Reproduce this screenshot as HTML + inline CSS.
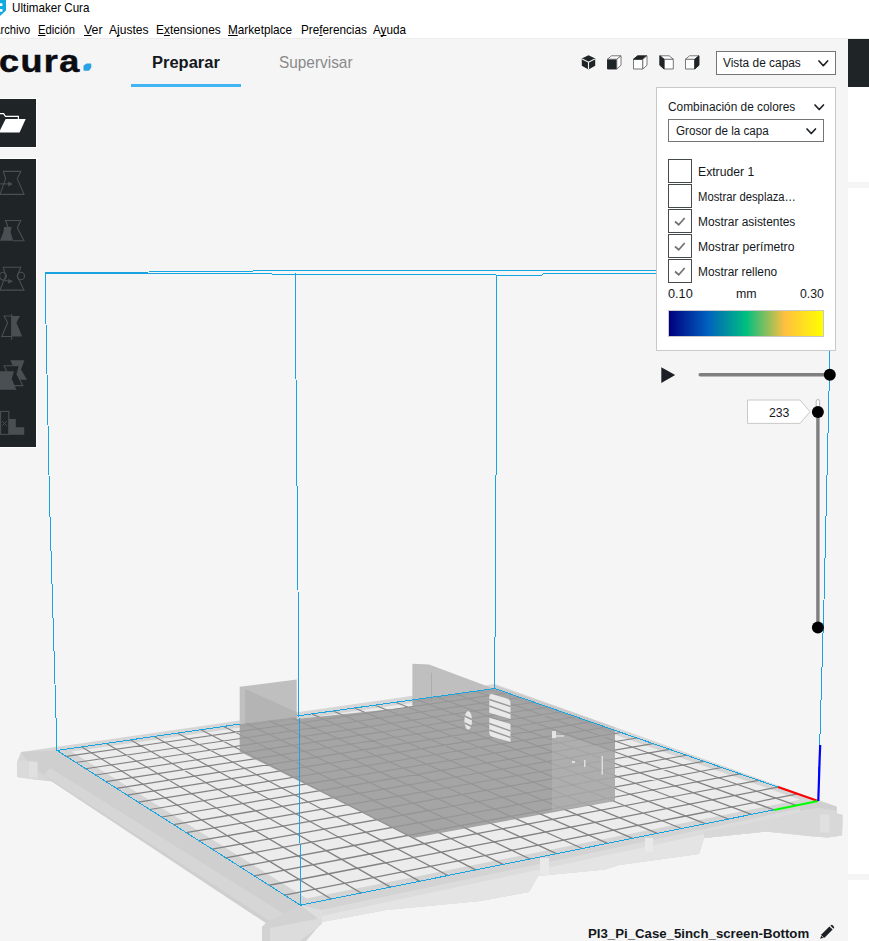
<!DOCTYPE html>
<html lang="es"><head><meta charset="utf-8"><title>Ultimaker Cura</title>
<style>
html,body{margin:0;padding:0;}
body{width:869px;height:941px;overflow:hidden;position:relative;background:#f5f5f5;font-family:"Liberation Sans",sans-serif;}
.t{position:absolute;white-space:nowrap;line-height:1;transform-origin:0 0;display:block;}
.abs{position:absolute;}
.scene{position:absolute;left:0;top:0;}
u{text-decoration:underline;text-underline-offset:1px;text-decoration-skip-ink:none;}
.cb{position:absolute;left:668px;width:22px;height:21.5px;border:1px solid #454a4d;background:#fff;}
</style></head><body>

<div class="abs" style="left:0;top:0;width:869px;height:38px;background:#fff;border-bottom:1px solid #ececec;"></div>
<svg class="scene" width="869" height="941" viewBox="0 0 869 941"><polygon points="21.0,752.0 495.0,684.0 836.5,806.6 837.0,813.5 842.5,815.0 842.0,835.6 828.0,837.6 814.5,836.6 766.0,831.5 704.0,838.0 699.0,854.0 619.0,865.0 605.0,869.5 538.0,876.0 529.0,892.0 480.0,901.0 386.0,910.0 322.0,922.0 306.0,941.0 262.0,941.0 262.0,927.0 266.0,923.0 52.0,781.5 38.0,780.0 17.0,777.0 17.0,762.0" fill="#d6d6d6"/><polygon points="57.0,750.5 21.0,752.0 30.0,765.0 52.0,781.5 266.0,923.0 300.5,905.2" fill="#cfcfcf"/><polygon points="50.0,768.0 44.0,775.0 270.0,921.0 284.0,914.0" fill="#d6d6d6"/><polygon points="17.0,762.0 22.0,760.0 38.0,762.0 38.0,780.0 17.0,777.0" fill="#dadada"/><rect x="29" y="762" width="8" height="15" fill="#e0e0e0"/><polygon points="300.5,905.2 818.0,801.0 836.5,806.6 837.0,813.5 842.5,815.0 842.0,835.6 828.0,837.6 814.5,836.6 766.0,831.5 704.0,838.0 699.0,854.0 619.0,865.0 605.0,869.5 538.0,876.0 529.0,892.0 480.0,901.0 386.0,910.0 322.0,922.0" fill="#dedede"/><polygon points="704.0,838.0 766.0,831.5 811.0,834.0 840.0,836.0 841.0,822.0 800.0,815.0 704.0,830.0" fill="#d6d6d6"/><polygon points="300.5,905.2 818.0,801.0 818.0,805.0 322.0,910.0" fill="#d3d3d3"/><polygon points="322.0,910.0 818.0,805.0 818.0,810.0 322.0,916.0" fill="#dcdcdc"/><polygon points="322.0,916.0 818.0,810.0 836.5,806.6 837.0,813.5 842.5,815.0 842.0,835.6 828.0,837.6 814.5,836.6 766.0,831.5 704.0,838.0 699.0,854.0 619.0,865.0 605.0,869.5 538.0,876.0 529.0,892.0 480.0,901.0 386.0,910.0 322.0,922.0" fill="#e4e4e4"/><polygon points="704.0,838.0 766.0,831.5 790.0,833.0 790.0,822.0 704.0,832.0" fill="#dcdcdc"/><rect x="540" y="858" width="9" height="17" fill="#e9e9e9"/><rect x="645" y="838" width="8" height="14" fill="#e9e9e9"/><polygon points="704,832 770,819 818,808 836.8,811 837,813.5 842.5,815 842,835.6 828,837.6 814.5,836.6 766,831.5 704,838" fill="#d8d8d8"/><polygon points="818,801 836.5,806.6 836.8,811 818,808 800,811 800,804.7" fill="#d0d0d0"/><rect x="820.2" y="814.3" width="9.3" height="18.2" fill="#e0e0e0"/><polygon points="266.0,923.0 300.5,905.0 322.0,922.0 306.0,941.0 262.0,941.0 262.0,927.0" fill="#d2d2d2"/><polygon points="270.0,928.0 322.0,918.0 322.0,924.0 300.0,941.0 270.0,941.0" fill="#dcdcdc"/><polygon points="57.0,750.5 300.5,905.2 818.0,801.0 494.7,688.5" fill="#d4d4d4"/><polygon points="71.4,751.5 306.6,898.4 800.3,799.8 492.0,691.5" fill="#ececec"/><path d="M428.7 704.3L507.5 693.0M475.5 691.2L528.1 709.9" stroke="#828282" stroke-width="1.0" fill="none" stroke-linecap="round"/><path d="M441.3 709.1L520.7 697.5M456.0 694.0L508.1 712.9" stroke="#828282" stroke-width="1.01" fill="none" stroke-linecap="round"/><path d="M454.1 714.0L534.1 702.2M416.4 699.6L467.3 719.1M436.3 696.8L487.8 716.0" stroke="#828282" stroke-width="1.02" fill="none" stroke-linecap="round"/><path d="M345.5 716.3L428.7 704.3M467.3 719.1L547.8 707.0M396.2 702.5L446.5 722.2" stroke="#828282" stroke-width="1.03" fill="none" stroke-linecap="round"/><path d="M357.5 721.3L441.3 709.1M375.7 705.4L425.4 725.4" stroke="#828282" stroke-width="1.04" fill="none" stroke-linecap="round"/><path d="M369.7 726.6L454.1 714.0M480.8 724.2L561.8 711.8M333.8 711.3L382.3 731.9M354.9 708.3L404.0 728.6M528.1 709.9L585.6 730.4" stroke="#828282" stroke-width="1.05" fill="none" stroke-linecap="round"/><path d="M257.7 728.9L345.5 716.3M382.3 731.9L467.3 719.1M494.6 729.5L576.1 716.8M312.5 714.3L360.3 735.2M508.1 712.9L565.1 733.7" stroke="#828282" stroke-width="1.06" fill="none" stroke-linecap="round"/><path d="M268.9 734.3L357.5 721.3M508.7 734.9L590.8 721.9M290.8 717.4L337.9 738.6M467.3 719.1L523.1 740.4M487.8 716.0L544.2 737.1" stroke="#828282" stroke-width="1.07" fill="none" stroke-linecap="round"/><path d="M280.5 739.8L369.7 726.6M395.1 737.3L480.8 724.2M246.7 723.6L292.3 745.4M523.1 740.4L605.8 727.2M268.9 720.5L315.3 742.0M446.5 722.2L501.7 743.9" stroke="#828282" stroke-width="1.08" fill="none" stroke-linecap="round"/><path d="M164.8 742.2L257.7 728.9M292.3 745.4L382.3 731.9M408.3 742.9L494.6 729.5M224.1 726.8L269.0 748.9M425.4 725.4L480.0 747.4" stroke="#828282" stroke-width="1.09" fill="none" stroke-linecap="round"/><path d="M175.2 748.0L268.9 734.3M201.3 730.1L245.3 752.5M421.7 748.6L508.7 734.9M537.9 746.1L621.2 732.5M382.3 731.9L435.5 754.5M404.0 728.6L457.9 750.9M585.6 730.4L648.8 752.9" stroke="#828282" stroke-width="1.1" fill="none" stroke-linecap="round"/><path d="M185.9 753.8L280.5 739.8M154.6 736.7L196.9 759.8M178.1 733.4L221.3 756.1M304.4 751.2L395.1 737.3M435.5 754.5L523.1 740.4M553.1 751.9L636.9 738.0M360.3 735.2L412.8 758.2M565.1 733.7L627.7 756.6" stroke="#828282" stroke-width="1.11" fill="none" stroke-linecap="round"/><path d="M66.3 756.4L164.8 742.2M130.7 740.1L172.2 763.5M316.8 757.1L408.3 742.9M337.9 738.6L389.8 761.9M568.7 757.9L653.0 743.6M544.2 737.1L606.3 760.2" stroke="#828282" stroke-width="1.12" fill="none" stroke-linecap="round"/><path d="M75.8 762.5L175.2 748.0M106.5 743.5L147.0 767.3M196.9 759.8L292.3 745.4M329.5 763.2L421.7 748.6M315.3 742.0L366.3 765.6M449.7 760.5L537.9 746.1M501.7 743.9L562.6 767.8M523.1 740.4L584.6 764.0" stroke="#828282" stroke-width="1.13" fill="none" stroke-linecap="round"/><path d="M81.9 747.0L121.5 771.1M208.2 765.9L304.4 751.2M292.3 745.4L342.6 769.5M464.2 766.7L553.1 751.9M584.6 764.0L669.6 749.4M480.0 747.4L540.2 771.6" stroke="#828282" stroke-width="1.14" fill="none" stroke-linecap="round"/><path d="M85.6 768.7L185.9 753.8M219.7 772.2L316.8 757.1M245.3 752.5L293.9 777.3M269.0 748.9L318.4 773.3M342.6 769.5L435.5 754.5M457.9 750.9L517.5 775.5M601.0 770.2L686.5 755.2" stroke="#828282" stroke-width="1.15" fill="none" stroke-linecap="round"/><path d="M95.6 775.0L196.9 759.8M221.3 756.1L269.0 781.3M356.0 775.8L449.7 760.5M479.1 773.0L568.7 757.9M435.5 754.5L494.4 779.5M648.8 752.9L718.6 777.8" stroke="#828282" stroke-width="1.16" fill="none" stroke-linecap="round"/><path d="M196.9 759.8L243.7 785.3M231.6 778.7L329.5 763.2M412.8 758.2L470.9 783.6M494.4 779.5L584.6 764.0M617.8 776.7L703.9 761.3M627.7 756.6L697.0 781.8" stroke="#828282" stroke-width="1.17" fill="none" stroke-linecap="round"/><path d="M172.2 763.5L218.0 789.5M105.9 781.6L208.2 765.9M243.7 785.3L342.6 769.5M369.7 782.4L464.2 766.7M389.8 761.9L447.1 787.7M635.0 783.3L721.7 767.5M584.6 764.0L652.7 790.0M606.3 760.2L675.0 785.9" stroke="#828282" stroke-width="1.18" fill="none" stroke-linecap="round"/><path d="M147.0 767.3L191.9 793.7M116.5 788.3L219.7 772.2M366.3 765.6L422.9 791.8M383.8 789.2L479.1 773.0M510.1 786.2L601.0 770.2M562.6 767.8L630.0 794.2" stroke="#828282" stroke-width="1.19" fill="none" stroke-linecap="round"/><path d="M121.5 771.1L165.4 797.9M342.6 769.5L398.3 796.1M256.2 792.1L356.0 775.8M526.2 793.0L617.8 776.7M540.2 771.6L607.0 798.5M652.7 790.0L739.9 773.8" stroke="#828282" stroke-width="1.2" fill="none" stroke-linecap="round"/><path d="M127.3 795.2L231.6 778.7M318.4 773.3L373.3 800.4M398.3 796.1L494.4 779.5M517.5 775.5L583.5 802.9M670.9 797.0L758.7 780.4" stroke="#828282" stroke-width="1.21" fill="none" stroke-linecap="round"/><path d="M293.9 777.3L347.9 804.8M138.4 802.2L243.7 785.3M269.1 799.1L369.7 782.4M494.4 779.5L559.7 807.3M542.7 800.1L635.0 783.3M718.6 777.8L796.2 805.4" stroke="#828282" stroke-width="1.22" fill="none" stroke-linecap="round"/><path d="M269.0 781.3L322.1 809.2M282.2 806.3L383.8 789.2M470.9 783.6L535.5 811.8M413.2 803.2L510.1 786.2M689.6 804.1L777.9 787.1M697.0 781.8L774.0 809.9" stroke="#828282" stroke-width="1.23" fill="none" stroke-linecap="round"/><path d="M243.7 785.3L295.8 813.7M149.9 809.5L256.2 792.1M447.1 787.7L510.9 816.4M428.5 810.5L526.2 793.0M559.7 807.3L652.7 790.0M675.0 785.9L751.4 814.4" stroke="#828282" stroke-width="1.24" fill="none" stroke-linecap="round"/><path d="M218.0 789.5L269.1 818.3M422.9 791.8L485.8 821.0M295.8 813.7L398.3 796.1M652.7 790.0L728.5 819.0M577.2 814.7L670.9 797.0M708.7 811.5L797.7 793.9" stroke="#828282" stroke-width="1.25" fill="none" stroke-linecap="round"/><path d="M191.9 793.7L241.9 823.0M398.3 796.1L460.4 825.7M161.7 817.0L269.1 799.1M444.2 818.0L542.7 800.1M630.0 794.2L705.1 823.7" stroke="#828282" stroke-width="1.26" fill="none" stroke-linecap="round"/><path d="M165.4 797.9L214.3 827.8M373.3 800.4L434.5 830.5M173.8 824.7L282.2 806.3M309.7 821.3L413.2 803.2M607.0 798.5L681.4 828.5M595.2 822.4L689.6 804.1" stroke="#828282" stroke-width="1.27" fill="none" stroke-linecap="round"/><path d="M347.9 804.8L408.1 835.4M583.5 802.9L657.3 833.4M324.1 829.1L428.5 810.5M460.4 825.7L559.7 807.3" stroke="#828282" stroke-width="1.28" fill="none" stroke-linecap="round"/><path d="M186.2 832.6L295.8 813.7M559.7 807.3L632.7 838.3M613.7 830.2L708.7 811.5" stroke="#828282" stroke-width="1.29" fill="none" stroke-linecap="round"/><path d="M322.1 809.2L381.3 840.4M535.5 811.8L607.7 843.3M338.8 837.2L444.2 818.0M477.0 833.7L577.2 814.7" stroke="#828282" stroke-width="1.3" fill="none" stroke-linecap="round"/><path d="M295.8 813.7L354.0 845.5M510.9 816.4L582.3 848.5M199.0 840.7L309.7 821.3M494.2 841.9L595.2 822.4" stroke="#828282" stroke-width="1.31" fill="none" stroke-linecap="round"/><path d="M269.1 818.3L326.2 850.6M354.0 845.5L460.4 825.7" stroke="#828282" stroke-width="1.32" fill="none" stroke-linecap="round"/><path d="M241.9 823.0L298.0 855.9M485.8 821.0L556.4 853.7M212.2 849.1L324.1 829.1M511.8 850.3L613.7 830.2" stroke="#828282" stroke-width="1.33" fill="none" stroke-linecap="round"/><path d="M214.3 827.8L269.2 861.2M460.4 825.7L530.0 859.0M369.7 854.0L477.0 833.7" stroke="#828282" stroke-width="1.34" fill="none" stroke-linecap="round"/><path d="M434.5 830.5L503.1 864.4M225.8 857.8L338.8 837.2" stroke="#828282" stroke-width="1.35" fill="none" stroke-linecap="round"/><path d="M408.1 835.4L475.8 869.9M385.8 862.8L494.2 841.9" stroke="#828282" stroke-width="1.36" fill="none" stroke-linecap="round"/><path d="M381.3 840.4L447.9 875.5M239.9 866.7L354.0 845.5" stroke="#828282" stroke-width="1.37" fill="none" stroke-linecap="round"/><path d="M402.4 871.9L511.8 850.3" stroke="#828282" stroke-width="1.38" fill="none" stroke-linecap="round"/><path d="M354.0 845.5L419.6 881.2M254.3 875.9L369.7 854.0" stroke="#828282" stroke-width="1.39" fill="none" stroke-linecap="round"/><path d="M326.2 850.6L390.6 887.1" stroke="#828282" stroke-width="1.4" fill="none" stroke-linecap="round"/><path d="M298.0 855.9L361.2 893.0M269.2 885.3L385.8 862.8" stroke="#828282" stroke-width="1.41" fill="none" stroke-linecap="round"/><path d="M269.2 861.2L331.1 899.0M284.6 895.1L402.4 871.9" stroke="#828282" stroke-width="1.43" fill="none" stroke-linecap="round"/><polygon points="239.7,686.7 296.7,679.6 296.7,717.0 239.7,724.0" fill="#bfbfbf"/><polygon points="245.0,689.0 296.7,712.0 296.7,717.0 245.0,723.5" fill="#b4b4b4"/><polygon points="412.4,663.8 429.0,664.4 494.0,688.7 412.4,700.0" fill="#bfbfbf"/><line x1="431.5" y1="672.8" x2="431.5" y2="701" stroke="#adadad" stroke-width="1"/><polygon points="239.7,724.0 296.7,717.0 296.7,719.0 412.4,707.0 412.4,700.0 494.0,688.7 615.0,730.0 615.0,801.0 413.0,838.0 239.7,751.5" fill="#999999" fill-opacity="0.86"/><polygon points="552.0,731.0 615.0,752.0 615.0,801.0 552.0,811.0" fill="#bcbcbc" fill-opacity="0.4"/><polygon points="494.0,685.2 615.0,727.2 615.0,730.5 494.0,688.5" fill="#c9c9c9"/><ellipse cx="468.2" cy="720.4" rx="3.8" ry="9.4" fill="#e6e6e6"/><path d="M489.3 696.5 Q489.3 693.3 492.5 694.2 L507.5 698.8 Q510.5 699.8 510.5 703 L510.5 719 L489.3 712.8 Z" fill="#e9e9e9"/><path d="M489.3 717.7 L510.5 724 L510.5 741.9 L493 737 Q489.3 736 489.3 732.5 Z" fill="#e9e9e9"/><path d="M489.3 699.5L510.5 706.5M489.3 706L510.5 713.5M489.3 723.5L510.5 731M489.3 730L510.5 737.5M464.5 716L472 719.5M464.5 723L472 726.5" stroke="#9a9a9a" stroke-width="1.5" fill="none"/><rect x="552" y="731" width="4" height="7" fill="#e4e4e4"/><rect x="556" y="735" width="8" height="2" fill="#d0d0d0"/><rect x="601.6" y="756" width="1.3" height="18.5" fill="#e4e4e4"/><rect x="584" y="760" width="1.5" height="7" fill="#e0e0e0"/><rect x="572" y="761" width="3" height="2" fill="#e0e0e0"/><path d="M57.0 750.5L300.5 905.2L818.0 801.0L494.7 688.5L297.5 715.9M239.7 724.1L57.0 750.5M57.0 750.5L49.5 500.0L45.0 273.0M45.0 273.0L295.0 270.6L660.0 271.0M45.0 273.0L496.5 275.0L542.0 275.0L543.0 274.0L660.0 273.7M300.5 905.2L298.0 590.0L295.0 270.6M494.7 688.5L496.0 480.0L496.5 275.0M818.0 801.0L824.0 600.0L830.0 350.0" stroke="#18a4e0" stroke-width="1" fill="none" stroke-linejoin="round" shape-rendering="crispEdges"/><line x1="818" y1="801" x2="778" y2="787" stroke="#ff0000" stroke-width="2"/><line x1="818" y1="801" x2="774" y2="810" stroke="#00ff00" stroke-width="2"/><path d="M818.3 801L819.6 760L820.2 745" stroke="#0000ff" stroke-width="2.2" fill="none"/></svg>
<div class="abs" style="left:848px;top:39px;width:21px;height:902px;background:#fff;"></div>
<div class="abs" style="left:848px;top:39px;width:21px;height:48px;background:#1f2427;"></div>
<div class="abs" style="left:848px;top:182px;width:21px;height:6px;background:#f5f5f5;"></div>
<div class="abs" style="left:848px;top:874px;width:21px;height:6px;background:#f5f5f5;"></div>
<svg class="abs" style="left:0;top:0" width="8" height="17" viewBox="0 0 8 17"><path d="M0 0H6V10.4L0 15.9Z" fill="#12a8e0"/><path d="M0 3.3H2.4V5.9H0ZM0 9.1H2.4V11.7H0Z" fill="#fff"/></svg>
<span class="t" style="left:11.7px;top:2.1px;font-size:12.7px;color:#000;transform:scaleX(0.9152);">Ultimaker Cura</span>
<span class="t" style="left:38.3px;top:23.2px;font-size:13px;color:#000;transform:scaleX(0.8654);"><u>E</u>dición</span>
<span class="t" style="left:83.5px;top:23.2px;font-size:13px;color:#000;transform:scaleX(0.9481);"><u>V</u>er</span>
<span class="t" style="left:109.4px;top:23.2px;font-size:13px;color:#000;transform:scaleX(0.9289);">A<u>j</u>ustes</span>
<span class="t" style="left:156.0px;top:23.2px;font-size:13px;color:#000;transform:scaleX(0.9150);">E<u>x</u>tensiones</span>
<span class="t" style="left:228.4px;top:23.2px;font-size:13px;color:#000;transform:scaleX(0.9038);"><u>M</u>arketplace</span>
<span class="t" style="left:300.5px;top:23.2px;font-size:13px;color:#000;transform:scaleX(0.9016);">Pre<u>f</u>erencias</span>
<span class="t" style="left:373.4px;top:23.2px;font-size:13px;color:#000;transform:scaleX(0.8983);">A<u>y</u>uda</span>
<span class="t" style="left:-6.8px;top:23.2px;font-size:13px;color:#000;transform:scaleX(0.8600);">Archivo</span>
<span class="t" style="left:-1.5px;top:46px;font-size:31px;font-weight:bold;letter-spacing:1.2px;color:#0b0b12;-webkit-text-stroke:0.5px #0b0b12;transform:scaleX(1.16);">cura</span>
<svg class="abs" style="left:83px;top:63px" width="9" height="8" viewBox="0 0 9 8"><path d="M1.3 2L3.6 0.5H7.6Q8.3 0.5 8.3 1.2V4.6L6.2 7.4Q5.9 7.8 5.3 7.8H1.2Q0.5 7.8 0.5 7.1V3.4Q0.5 2.5 1.3 2Z" fill="#2aa2e4"/></svg>
<span class="t" style="left:152.3px;top:55.3px;font-size:16.8px;font-weight:bold;color:#14181c;transform:scaleX(0.9825);">Preparar</span>
<span class="t" style="left:279.2px;top:55.3px;font-size:16.8px;color:#8a8a8a;transform:scaleX(0.9166);">Supervisar</span>
<div class="abs" style="left:131px;top:84px;width:110px;height:3px;background:#41b4f3;"></div>
<svg class="abs" style="left:581px;top:55px" width="15" height="15" viewBox="0 0 15 15"><path d="M7.5 0.3L14.2 3.6V10.8L7.5 14.6L0.8 10.8V3.6Z" fill="#1f2427"/><path d="M1.2 4L7.5 7.2L13.8 4M7.5 7.2V14.2" stroke="#f5f5f5" stroke-width="1.1" fill="none"/></svg>
<svg class="abs" style="left:607px;top:55px" width="15" height="15" viewBox="0 0 15 15"><path d="M0.5 4.2H9.8V14H0.5Z" fill="#1f2427" stroke="#1f2427" stroke-width="0.9" stroke-linejoin="round"/><path d="M0.5 4.2L4.6 0.8H14L9.8 4.2Z" fill="#fff" stroke="#6a6a6a" stroke-width="0.9" stroke-linejoin="round"/><path d="M9.8 4.2L14 0.8V10.2L9.8 14Z" fill="#fff" stroke="#6a6a6a" stroke-width="0.9" stroke-linejoin="round"/></svg>
<svg class="abs" style="left:633px;top:55px" width="15" height="15" viewBox="0 0 15 15"><path d="M0.5 4.2H9.8V14H0.5Z" fill="#fff" stroke="#6a6a6a" stroke-width="0.9" stroke-linejoin="round"/><path d="M0.5 4.2L4.6 0.8H14L9.8 4.2Z" fill="#1f2427" stroke="#1f2427" stroke-width="0.9" stroke-linejoin="round"/><path d="M9.8 4.2L14 0.8V10.2L9.8 14Z" fill="#fff" stroke="#6a6a6a" stroke-width="0.9" stroke-linejoin="round"/></svg>
<svg class="abs" style="left:659px;top:55px" width="15" height="15" viewBox="0 0 15 15"><path d="M5 4.2H14.3V14H5Z" fill="#fff" stroke="#6a6a6a" stroke-width="0.9" stroke-linejoin="round"/><path d="M5 4.2L0.8 0.8H10.2L14.3 4.2Z" fill="#fff" stroke="#6a6a6a" stroke-width="0.9" stroke-linejoin="round"/><path d="M5 4.2L0.8 0.8V10.2L5 14Z" fill="#1f2427" stroke="#1f2427" stroke-width="0.9" stroke-linejoin="round"/></svg>
<svg class="abs" style="left:685px;top:55px" width="15" height="15" viewBox="0 0 15 15"><path d="M0.5 4.2H9.8V14H0.5Z" fill="#fff" stroke="#6a6a6a" stroke-width="0.9" stroke-linejoin="round"/><path d="M0.5 4.2L4.6 0.8H14L9.8 4.2Z" fill="#fff" stroke="#6a6a6a" stroke-width="0.9" stroke-linejoin="round"/><path d="M9.8 4.2L14 0.8V10.2L9.8 14Z" fill="#1f2427" stroke="#1f2427" stroke-width="0.9" stroke-linejoin="round"/></svg>
<div class="abs" style="left:716px;top:51px;width:118px;height:22px;border:1px solid #757575;background:#fff;"></div>
<span class="t" style="left:723.3px;top:57.1px;font-size:12.5px;color:#14181c;transform:scaleX(0.9515);">Vista de capas</span>
<svg class="abs" style="left:816.7px;top:58.6px" width="12.6" height="8.7"><path d="M2 2L6.30 6.70L10.6 2" stroke="#1c2024" stroke-width="1.7" fill="none" stroke-linecap="round" stroke-linejoin="round"/></svg>
<div class="abs" style="left:656px;top:87px;width:178px;height:262px;border:1px solid #c9c9c9;background:#fff;"></div>
<span class="t" style="left:668.3px;top:100.6px;font-size:12.5px;color:#14181c;transform:scaleX(0.9493);">Combinación de colores</span>
<svg class="abs" style="left:813.2px;top:102.5px" width="12.5" height="8.5"><path d="M2 2L6.25 6.50L10.5 2" stroke="#1c2024" stroke-width="1.7" fill="none" stroke-linecap="round" stroke-linejoin="round"/></svg>
<div class="abs" style="left:668px;top:119px;width:154px;height:21px;border:1px solid #757575;background:#fff;"></div>
<span class="t" style="left:675.7px;top:125.1px;font-size:12.5px;color:#14181c;transform:scaleX(0.9340);">Grosor de la capa</span>
<svg class="abs" style="left:804.8px;top:127.2px" width="12.5" height="8.5"><path d="M2 2L6.25 6.50L10.5 2" stroke="#1c2024" stroke-width="1.7" fill="none" stroke-linecap="round" stroke-linejoin="round"/></svg>
<div class="cb" style="top:159px;"></div>
<span class="t" style="left:698.3px;top:165.8px;font-size:12.5px;color:#14181c;transform:scaleX(0.9746);">Extruder 1</span>
<div class="cb" style="top:184px;"></div>
<span class="t" style="left:698.3px;top:190.8px;font-size:12.5px;color:#14181c;transform:scaleX(0.9033);">Mostrar desplaza…</span>
<div class="cb" style="top:209px;"></div>
<svg class="abs" style="left:674px;top:216px" width="13" height="11"><path d="M1 5.5L4.7 8.7L10.7 2" stroke="#707375" stroke-width="1.7" fill="none"/></svg>
<span class="t" style="left:698.3px;top:215.8px;font-size:12.5px;color:#14181c;transform:scaleX(0.9528);">Mostrar asistentes</span>
<div class="cb" style="top:234px;"></div>
<svg class="abs" style="left:674px;top:241px" width="13" height="11"><path d="M1 5.5L4.7 8.7L10.7 2" stroke="#707375" stroke-width="1.7" fill="none"/></svg>
<span class="t" style="left:698.3px;top:240.8px;font-size:12.5px;color:#14181c;transform:scaleX(0.9705);">Mostrar perímetro</span>
<div class="cb" style="top:259px;"></div>
<svg class="abs" style="left:674px;top:266px" width="13" height="11"><path d="M1 5.5L4.7 8.7L10.7 2" stroke="#707375" stroke-width="1.7" fill="none"/></svg>
<span class="t" style="left:698.3px;top:265.8px;font-size:12.5px;color:#14181c;transform:scaleX(0.9489);">Mostrar relleno</span>
<span class="t" style="left:668.3px;top:288.2px;font-size:12.5px;color:#14181c;transform:scaleX(1.0153);">0.10</span>
<span class="t" style="left:736.0px;top:288.2px;font-size:12.5px;color:#14181c;transform:scaleX(0.9892);">mm</span>
<span class="t" style="left:799.7px;top:288.2px;font-size:12.5px;color:#14181c;transform:scaleX(0.9783);">0.30</span>
<div class="abs" style="left:668px;top:310px;width:154px;height:25px;border:1px solid #c9c9c9;background:linear-gradient(90deg,rgb(0,0,128) 0%,rgb(0,96,191) 25%,rgb(0,191,128) 50%,rgb(255,191,64) 75%,rgb(255,255,0) 100%);"></div>
<svg class="abs" style="left:655px;top:360px" width="190" height="280" viewBox="655 360 190 280"><path d="M661.3 367.2L675.2 375L661.3 382.9Z" fill="#1c2024"/><rect x="698.5" y="373" width="131" height="3.4" rx="1.7" fill="#7f7f7f"/><circle cx="829.8" cy="374.7" r="6" fill="#000"/><rect x="816.2" y="399.5" width="3.4" height="14" rx="1.7" fill="#fff" stroke="#9a9a9a" stroke-width="0.7"/><rect x="816.2" y="412" width="3.4" height="216" fill="#7f7f7f"/><circle cx="817.9" cy="412.1" r="6" fill="#000"/><circle cx="817.9" cy="627.4" r="6" fill="#000"/><path d="M747.5 400H800L810 411.7L800 423.4H747.5Z" fill="#fff" stroke="#c9c9c9" stroke-width="1"/></svg>
<span class="t" style="left:769.3px;top:407.0px;font-size:12.5px;color:#14181c;transform:scaleX(0.9781);">233</span>
<div class="abs" style="left:-1px;top:98px;width:36px;height:48px;background:#1f2427;border:1px solid #fff;"></div>
<div class="abs" style="left:-1px;top:158px;width:36px;height:288px;background:#1f2427;border:1px solid #fff;"></div>
<svg class="abs" style="left:0;top:99px" width="36" height="48" viewBox="0 0 36 48"><path d="M-6 14.7H3.6L5.4 17.3H18.4V20.5" stroke="#fff" stroke-width="1.2" fill="none"/><path d="M5.6 20H25.7L19.6 33.4H-1Z" fill="#fff"/></svg>
<svg class="abs" style="left:0;top:169px" width="36" height="36" viewBox="0 0 36 36" overflow="hidden"><path d="M3.3 2.4H20.8L17.3 9.6L24 25.4H0L5.6 9.6Z" stroke="#4a4f53" fill="none" stroke-width="1.1"/><path d="M-2 14.9H9" stroke="#4a4f53" stroke-width="1.1"/><path d="M8.2 12.5L12.9 14.9L8.2 17.4Z" fill="#4a4f53"/></svg>
<svg class="abs" style="left:0;top:215px" width="36" height="36" viewBox="0 0 36 36" overflow="hidden"><path d="M8.2 12.7L5.6 5.5H20.8L17.3 12.7L24 25.8H13" stroke="#4a4f53" fill="none" stroke-width="1.1"/><path d="M4.1 12.1H11.7L10.5 16.8L13.1 25.8H0L3.5 16.8Z" fill="#4a4f53"/></svg>
<svg class="abs" style="left:0;top:264px" width="36" height="36" viewBox="0 0 36 36" overflow="hidden"><path d="M3.3 3.3H20.8L17.3 12L24 26.1H0L5.6 12Z" stroke="#4a4f53" fill="none" stroke-width="1.1"/><ellipse cx="3" cy="12.2" rx="3.4" ry="3.9" stroke="#4a4f53" fill="none" stroke-width="1.1"/><ellipse cx="20.9" cy="12" rx="3.6" ry="3.8" stroke="#4a4f53" fill="none" stroke-width="1.1"/><path d="M8.2 15L13.1 17.3L8.2 19.6Z" fill="#4a4f53"/><path d="M4 16L8.5 17.3" stroke="#4a4f53" stroke-width="1.1"/></svg>
<svg class="abs" style="left:0;top:311px" width="36" height="36" viewBox="0 0 36 36" overflow="hidden"><path d="M11.7 5H4.1L7.6 11.8L1.75 25.5H11.7" stroke="#4a4f53" fill="none" stroke-width="1.1"/><path d="M11.7 5H19.9L16.4 11.8L22.2 25.5H11.7Z" fill="#4a4f53"/><path d="M11.7 3V28.7" stroke="#4a4f53" stroke-width="1.1"/></svg>
<svg class="abs" style="left:0;top:356px" width="36" height="36" viewBox="0 0 36 36" overflow="hidden"><path d="M10.3 4.2H24.5L21 13.5L27 23.8H17L14.6 13.5Z" fill="#4a4f53"/><path d="M4.1 9.8H19.3L17 18.2L22.8 29.6H10L8 18.2Z" stroke="#4a4f53" fill="#1f2427" stroke-width="1.1"/><path d="M-2 15.3H14L11.7 23L16.4 33.7H-2Z" fill="#4a4f53"/></svg>
<svg class="abs" style="left:0;top:408px" width="36" height="36" viewBox="0 0 36 36" overflow="hidden"><rect x="0.6" y="3.4" width="8.2" height="23" stroke="#4a4f53" fill="none" stroke-width="1.1"/><path d="M8.8 10.9H15.8V19.2H24.2V26.8H8.8Z" fill="#4a4f53"/><path d="M2.1 13L6.8 17.9M6.8 13L2.1 17.9" stroke="#4a4f53" stroke-width="0.9"/></svg>
<span class="t" style="left:588.3px;top:927.2px;font-size:13px;font-weight:bold;color:#14181c;transform:scaleX(1.0171);">PI3_Pi_Case_5inch_screen-Bottom</span>
<svg class="abs" style="left:819px;top:924px" width="17" height="16" viewBox="0 0 17 16"><path d="M1.2 14.8L2.6 10.2L10.4 2.4L13.6 5.6L5.8 13.4Z" fill="#1c2024"/><path d="M11.3 1.5L12.3 0.9Q12.9 0.6 13.4 1.1L15 2.7Q15.4 3.2 15 3.8L14.5 4.7Z" fill="#1c2024"/><path d="M2.3 11.5L4.6 13.7" stroke="#f5f5f5" stroke-width="0.8"/></svg>
</body></html>
